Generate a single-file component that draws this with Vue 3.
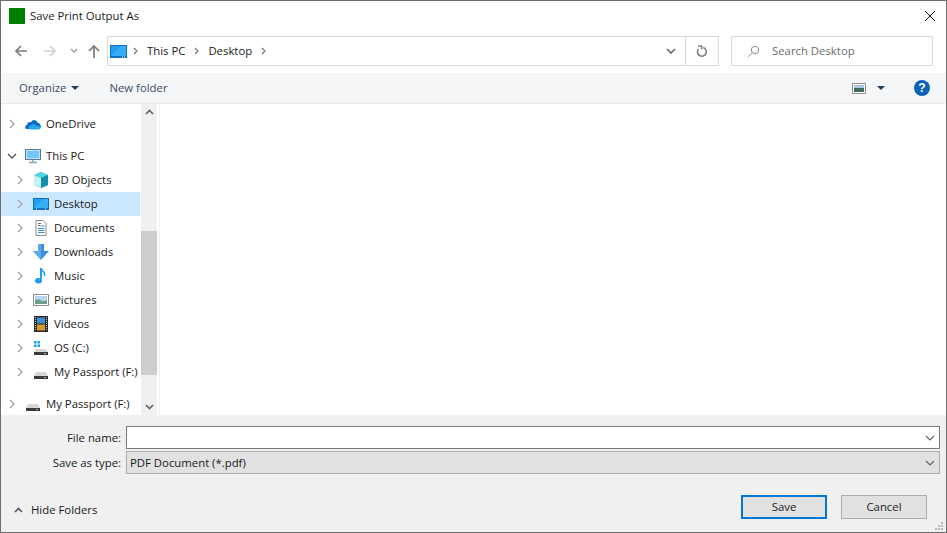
<script setup>
const children = [
  { name: 'OneDrive', icon: 'cloud', level: 0, arrow: 'right' },
  { name: 'This PC', icon: 'pc', level: 0, arrow: 'down', gapBefore: true },
  { name: '3D Objects', icon: 'cube', level: 1, arrow: 'right' },
  { name: 'Desktop', icon: 'desktop', level: 1, arrow: 'right', selected: true },
  { name: 'Documents', icon: 'doc', level: 1, arrow: 'right' },
  { name: 'Downloads', icon: 'download', level: 1, arrow: 'right' },
  { name: 'Music', icon: 'music', level: 1, arrow: 'right' },
  { name: 'Pictures', icon: 'picture', level: 1, arrow: 'right' },
  { name: 'Videos', icon: 'video', level: 1, arrow: 'right' },
  { name: 'OS (C:)', icon: 'os', level: 1, arrow: 'right' },
  { name: 'My Passport (F:)', icon: 'drive', level: 1, arrow: 'right' },
  { name: 'My Passport (F:)', icon: 'drive', level: 0, arrow: 'right', gapBefore: true },
]
</script>

<template>
  <div class="window">
    <header class="titlebar">
      <span class="appicon"></span>
      <span class="title">Save Print Output As</span>
      <svg class="close" width="12" height="12" viewBox="0 0 12 12"><path d="M1 1l10 10M11 1L1 11" stroke="#111" stroke-width="1" fill="none"/></svg>
    </header>

    <div class="navrow">
      <div class="navbtns">
        <svg width="14" height="14" viewBox="0 0 14 14"><path d="M13 7H2M7 2L2 7l5 5" stroke="#7a7a7a" stroke-width="1.7" fill="none"/></svg>
        <svg class="fwd" width="14" height="14" viewBox="0 0 14 14"><path d="M1 7h11M7 2l5 5-5 5" stroke="#d0d0d0" stroke-width="1.7" fill="none"/></svg>
        <svg class="recent" width="8" height="6" viewBox="0 0 8 6"><path d="M1 1l3 3 3-3" stroke="#a0a0a0" stroke-width="1.4" fill="none"/></svg>
        <svg class="up" width="14" height="14" viewBox="0 0 14 14"><path d="M7 14V2M2 7l5-5 5 5" stroke="#7a7a7a" stroke-width="1.7" fill="none"/></svg>
      </div>
      <div class="address">
        <svg class="addr-icon" width="17" height="13" viewBox="0 0 17 13"><rect width="17" height="13" fill="#0f6fc4"/><rect x="1" y="1" width="15" height="10" fill="#1e9df2"/><path d="M1 11L11 1h5v10z" fill="#35aef5"/><path d="M12 12h1M14 12h1" stroke="#fff"/></svg>
        <svg class="crumb" width="5" height="8" viewBox="0 0 5 8"><path d="M1 1l3 3-3 3" stroke="#777" stroke-width="1.2" fill="none"/></svg>
        <span class="crumb-text">This PC</span>
        <svg class="crumb" width="5" height="8" viewBox="0 0 5 8"><path d="M1 1l3 3-3 3" stroke="#777" stroke-width="1.2" fill="none"/></svg>
        <span class="crumb-text">Desktop</span>
        <svg class="crumb" width="5" height="8" viewBox="0 0 5 8"><path d="M1 1l3 3-3 3" stroke="#777" stroke-width="1.2" fill="none"/></svg>
        <span class="spacer"></span>
        <span class="addr-btn drop">
          <svg width="10" height="6" viewBox="0 0 10 6"><path d="M1 1l4 4 4-4" stroke="#666" stroke-width="1.6" fill="none"/></svg>
        </span>
        <span class="addr-btn refresh">
          <svg width="12" height="13" viewBox="0 0 12 13"><path d="M7.2 2.6A4.4 4.4 0 1 1 2.5 4" stroke="#808080" stroke-width="1.6" fill="none"/><path d="M2 1h3.6v3.6" stroke="#808080" stroke-width="1.4" fill="none"/></svg>
        </span>
      </div>
      <div class="search">
        <svg width="13" height="13" viewBox="0 0 13 13"><circle cx="8" cy="5" r="3.7" stroke="#8a8a8a" fill="none"/><path d="M5.3 7.7L1 12" stroke="#c98a8a" fill="none"/></svg>
        <span>Search Desktop</span>
      </div>
    </div>

    <div class="toolbar">
      <span class="tool">Organize</span>
      <span class="caret"></span>
      <span class="tool newfolder">New folder</span>
      <span class="spacer"></span>
      <svg class="view" width="14" height="11" viewBox="0 0 14 11"><rect x=".5" y=".5" width="13" height="10" fill="#fff" stroke="#909090"/><rect x="2" y="2" width="10" height="3" fill="#a8c8e8"/><rect x="2" y="5" width="10" height="4" fill="#3f6b5a"/></svg>
      <span class="caret view-caret"></span>
      <span class="help">?</span>
    </div>

    <main class="main">
      <nav class="tree">
        <div class="tree-list">
          <div v-for="(item, i) in children" :key="i" class="row" :class="{ selected: item.selected, gap: item.gapBefore, sub: item.level === 1 }">
            <svg v-if="item.arrow === 'right'" class="arrow" width="6" height="10" viewBox="0 0 6 10"><path d="M1 1l4 4-4 4" stroke="#a6a6a6" stroke-width="1.4" fill="none"/></svg>
            <svg v-else class="arrow down" width="10" height="6" viewBox="0 0 10 6"><path d="M1 1l4 4 4-4" stroke="#555" stroke-width="1.4" fill="none"/></svg>
            <svg class="icon" width="16" height="16" viewBox="0 0 16 16">
              <template v-if="item.icon === 'cloud'">
                <path d="M2 13C-.5 13-.5 9.500 2 9 2.200 6.500 4.500 5.500 6 6.500 7.500 3 11.500 3.500 12.500 6.800 15 7 16.500 9.500 15.500 11.500 15 12.500 14 13 13 13z" fill="#0f6cc9"/>
                <path d="M4.500 13.500C3 12 4 9.500 6 9.500 7.200 7.500 10 7.500 11 9.500c2.500 0 5 1 4.500 2.500-.4 1-1.300 1.500-2.500 1.500z" fill="#28a8ea"/>
              </template>
              <template v-else-if="item.icon === 'pc'">
                <rect x=".5" y="1.500" width="15" height="10" fill="#bde4fa" stroke="#5b7c94"/>
                <rect x="2" y="3" width="12" height="7" fill="#74c6f6"/>
                <path d="M4 14.500h8M8 12v2" stroke="#86a3b8" stroke-width="1.500"/>
              </template>
              <template v-else-if="item.icon === 'cube'">
                <path d="M8 0l7 3v10l-7 3-7-3V3z" fill="#12a5b5"/>
                <path d="M8 6L1 3l7-3 7 3z" fill="#57d2dc"/>
                <path d="M1 3l7 3v10l-7-3z" fill="#c6f1f2"/>
                <path d="M8 6l7-3v10l-7 3z" fill="#0f8fa8"/>
              </template>
              <template v-else-if="item.icon === 'desktop'">
                <rect y="2" width="16" height="12" fill="#0f6fc4"/>
                <rect x="1" y="3" width="14" height="9" fill="#1e9df2"/>
                <path d="M1 12l9-9h5v9z" fill="#35aef5"/>
                <path d="M3 13h1M12 13h1" stroke="#fff"/>
              </template>
              <template v-else-if="item.icon === 'doc'">
                <path d="M3 .5h7l3 3v12H3z" fill="#fdfdfd" stroke="#8e8e8e"/>
                <path d="M7.500 6h4M5 8.500h6.500M5 10.500h6.500M5 12.500h6.500" stroke="#3f8fcf"/>
                <path d="M5 3.500h3M5 5.500h2" stroke="#666"/>
              </template>
              <template v-else-if="item.icon === 'download'">
                <path d="M5 0h6v7h5l-8 9-8-9h5z" fill="#3a8fdf"/>
                <path d="M5 0h3v16L0 7h5z" fill="#5cabef"/>
              </template>
              <template v-else-if="item.icon === 'music'">
                <path d="M8 0v11.500" stroke="#1e9df2" stroke-width="2" fill="none"/>
                <ellipse cx="5.500" cy="12.800" rx="3.500" ry="2.700" fill="#1e9df2"/>
                <path d="M8 0c1 3.500 4.500 3.500 3.500 8" stroke="#1e9df2" stroke-width="1.500" fill="none"/>
              </template>
              <template v-else-if="item.icon === 'picture'">
                <rect x=".5" y="2.500" width="15" height="11" fill="#fff" stroke="#8c8c8c"/>
                <rect x="2" y="4" width="12" height="4" fill="#b4d6ee"/>
                <path d="M2 8c3-1 5 0 7 .5s3 0 5-.5v4H2z" fill="#6b9d8e"/>
              </template>
              <template v-else-if="item.icon === 'video'">
                <rect x="1" width="14" height="16" fill="#2a2a2a"/>
                <rect x="4" y="1.500" width="8" height="6" fill="#3f8fd4"/>
                <rect x="4" y="8.500" width="8" height="6" fill="#d49a2a"/>
                <path d="M2.500 1v14M13.500 1v14" stroke="#bbb" stroke-dasharray="1 1"/>
              </template>
              <template v-else-if="item.icon === 'os'">
                <path d="M1 1h2.500v2.500H1zM4.500 1H7v2.500H4.500zM1 4.500h2.500V7H1zM4.500 4.500H7V7H4.500z" fill="#15a5ec"/>
                <path d="M3 9h10l2 3H1z" fill="#d6d6d6"/>
                <rect x="1" y="12" width="14" height="3" fill="#3a3a3a"/>
                <rect x="11" y="13" width="2" height="1" fill="#5fe05f"/>
              </template>
              <template v-else>
                <path d="M3 8h10l2 4H1z" fill="#d6d6d6"/>
                <rect x="1" y="12" width="14" height="3" fill="#3a3a3a"/>
                <rect x="11" y="13" width="2" height="1" fill="#5fe05f"/>
              </template>
            </svg>
            <span class="label">{{ item.name }}</span>
          </div>
        </div>
        <div class="scrollbar">
          <svg class="sb-up" width="9" height="6" viewBox="0 0 9 6"><path d="M1 5l3.500-3.500L8 5" stroke="#606060" stroke-width="1.600" fill="none"/></svg>
          <div class="thumb"></div>
          <svg class="sb-down" width="9" height="6" viewBox="0 0 9 6"><path d="M1 1l3.500 3.500L8 1" stroke="#606060" stroke-width="1.600" fill="none"/></svg>
        </div>
      </nav>
      <section class="files"></section>
    </main>

    <footer class="bottom">
      <div class="form">
        <label class="flabel">File name:</label>
        <div class="field input">
          <svg width="10" height="6" viewBox="0 0 10 6"><path d="M1 1l4 4 4-4" stroke="#606060" stroke-width="1.100" fill="none"/></svg>
        </div>
        <label class="flabel">Save as type:</label>
        <div class="field select">
          <span>PDF Document (*.pdf)</span>
          <svg width="10" height="6" viewBox="0 0 10 6"><path d="M1 1l4 4 4-4" stroke="#606060" stroke-width="1.100" fill="none"/></svg>
        </div>
      </div>
      <div class="actions">
        <div class="hide">
          <svg width="9" height="6" viewBox="0 0 9 6"><path d="M1 5l3.500-3.500L8 5" stroke="#555" stroke-width="1.600" fill="none"/></svg>
          <span>Hide Folders</span>
        </div>
        <span class="spacer"></span>
        <button class="btn primary">Save</button>
        <button class="btn">Cancel</button>
      </div>
      <svg class="grip" width="9" height="9" viewBox="0 0 9 9"><path d="M6 0h2v2H6zM3 3h2v2H3zM6 3h2v2H6zM0 6h2v2H0zM3 6h2v2H3zM6 6h2v2H6z" fill="#b8b8b8"/></svg>
    </footer>
  </div>
</template>

<style scoped>
.window {
  box-sizing: border-box;
  width: 947px;
  height: 533px;
  border: 1px solid #6e6e6e;
  background: #fff;
  display: flex;
  flex-direction: column;
  font-family: "Open Sans", "Noto Sans", sans-serif;
  font-size: 11.35px;
  color: #1a1a1a;
  overflow: hidden;
  position: relative;
}
.spacer { flex: 1; }
.titlebar {
  height: 29px;
  display: flex;
  align-items: center;
  padding-left: 8px;
  flex: none;
}
.appicon { width: 16px; height: 16px; background: #008000; }
.title { margin-left: 5px; }
.close { margin-left: auto; margin-right: 10px; margin-top: 1px; }
.navrow {
  height: 30px;
  margin-top: 6px;
  display: flex;
  align-items: center;
  flex: none;
}
.navbtns { width: 106px; display: flex; align-items: center; padding-left: 13px; box-sizing: border-box; }
.fwd { margin-left: 15px; }
.recent { margin-left: 13px; }
.up { margin-left: 9px; }
.address {
  box-sizing: border-box;
  width: 612px;
  height: 30px;
  border: 1px solid #d9d9d9;
  display: flex;
  align-items: center;
  padding-left: 2px;
}
.addr-icon { flex: none; }
.crumb { margin-left: 6px; flex: none; }
.crumb + .crumb-text { margin-left: 9px; }
.crumb-text + .crumb { margin-left: 9px; }
.crumb-text { color: #1a1a1a; padding-bottom: 2px; }
.addr-btn { height: 28px; display: flex; align-items: center; justify-content: center; flex: none; }
.drop { width: 28px; border-right: 1px solid #d9d9d9; }
.refresh { width: 32px; }
.search {
  box-sizing: border-box;
  width: 202px;
  height: 30px;
  margin-left: 12px;
  border: 1px solid #d9d9d9;
  display: flex;
  align-items: center;
  padding-left: 15px;
  color: #6d6d6d;
}
.search span { margin-left: 12px; padding-bottom: 2px; }
.toolbar {
  margin-top: 7px;
  height: 30px;
  background: #f5f6f7;
  border-bottom: 1px solid #e9e9e9;
  box-sizing: content-box;
  display: flex;
  align-items: center;
  padding-left: 18px;
  flex: none;
}
.tool { color: #3a4a66; padding-bottom: 2px; }
.caret {
  width: 0; height: 0;
  border-left: 4px solid transparent;
  border-right: 4px solid transparent;
  border-top: 4px solid #1f3a63;
  margin-left: 5px;
}
.newfolder { margin-left: 30px; }
.view { margin-right: 11px; }
.view-caret { margin-left: 0; }
.help {
  width: 16px;
  height: 16px;
  border-radius: 50%;
  background: #0b63b8;
  color: #fff;
  font: bold 12px/16px "Liberation Sans", sans-serif;
  text-align: center;
  margin-left: 29px;
  margin-right: 16px;
}
.main { flex: 1; display: flex; min-height: 0; }
.tree { width: 158px; display: flex; flex: none; border-right: 1px solid #f0f0f0; box-sizing: content-box; }
.tree-list { width: 139px; margin-right: 1px; padding-top: 8px; overflow: hidden; flex: none; }
.row {
  height: 24px;
  display: flex;
  align-items: center;
  white-space: nowrap;
  padding-left: 8px;
}
.row.gap { margin-top: 8px; }
.row.sub { padding-left: 16px; }
.row.selected { background: #cce8ff; }
.arrow { flex: none; width: 6px; margin-right: 10px; }
.arrow.down { width: 10px; margin-right: 8px; margin-left: -2px; }
.row .icon { flex: none; margin-right: 5px; }
.label { color: #1a1a1a; padding-bottom: 2px; }
.scrollbar {
  width: 16px;
  flex: none;
  background: #f0f0f0;
  display: flex;
  flex-direction: column;
  align-items: center;
}
.sb-up { margin-top: 5px; flex: none; }
.thumb { width: 16px; height: 144px; background: #cdcdcd; margin-top: 116px; flex: none; }
.sb-down { margin-top: auto; margin-bottom: 5px; flex: none; }
.files { flex: 1; background: #fff; }
.bottom {
  flex: none;
  height: 117px;
  background: #f0f0f0;
  box-sizing: border-box;
  position: relative;
  padding-top: 11px;
}
.form {
  display: grid;
  grid-template-columns: 120px 814px;
  grid-template-rows: 23px 23px;
  row-gap: 2px;
  column-gap: 5px;
  align-items: center;
}
.flabel { text-align: right; }
.field {
  box-sizing: border-box;
  height: 23px;
  display: flex;
  align-items: center;
  justify-content: flex-end;
  padding: 0 4px 0 3px;
}
.input { background: #fff; border: 1px solid #7a7a7a; }
.select { background: #e1e1e1; border: 1px solid #adadad; justify-content: space-between; }
.actions {
  display: flex;
  align-items: center;
  margin-top: 21px;
  padding-left: 13px;
  padding-right: 19px;
}
.hide { display: flex; align-items: center; margin-top: 6px; }
.hide span { margin-left: 8px; padding-bottom: 2px; }
.btn {
  box-sizing: border-box;
  width: 86px;
  height: 24px;
  background: #e1e1e1;
  border: 1px solid #adadad;
  border-radius: 0;
  font: inherit;
  color: #1a1a1a;
  padding: 0 0 2px;
  margin-left: 14px;
}
.primary { border: 2px solid #0078d7; }
.grip { position: absolute; right: 2px; bottom: 1px; }
</style>
